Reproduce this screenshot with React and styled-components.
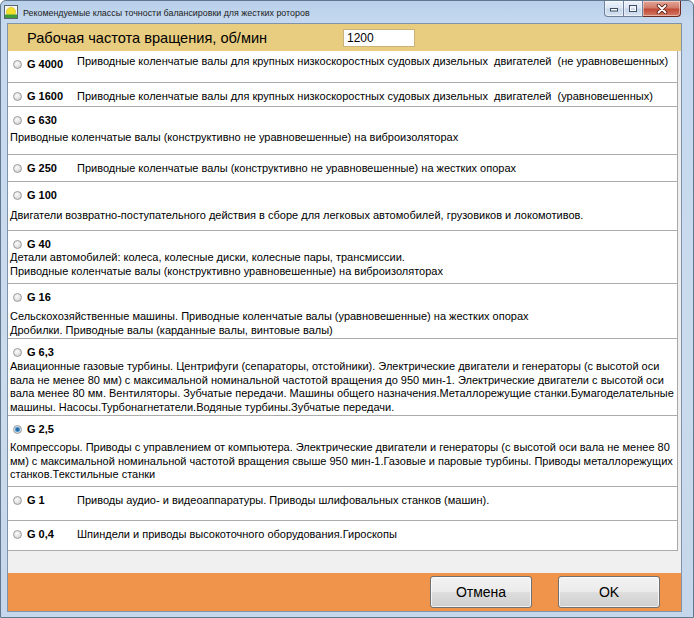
import React from 'react';
import styled, { createGlobalStyle } from 'styled-components';

const GlobalStyle = createGlobalStyle`
  html, body { margin: 0; padding: 0; width: 694px; height: 618px; overflow: hidden; background: #ffffff; }
  body { font-family: "Liberation Sans", Arial, sans-serif; color: #000; }
  #root { width: 694px; height: 618px; }
`;

const Window = styled.div`
  box-sizing: border-box;
  width: 694px;
  height: 618px;
  display: flex;
  flex-direction: column;
  border: 1px solid #62788f;
  border-radius: 6px 6px 0 0;
  background: linear-gradient(180deg, #b9d0ea 0px, #c6d9ef 22px, #cbdbee 60%, #c7d7eb 100%);
  overflow: hidden;
`;

const TitleBar = styled.div`
  height: 22px;
  flex: none;
  display: flex;
  align-items: center;
  padding-left: 3px;
  padding-right: 12px;
`;

const TitleText = styled.div`
  margin-left: 5px;
  padding-top: 2px;
  font-size: 8.9px;
  color: #1b1b1b;
  white-space: nowrap;
`;

const CaptionGroup = styled.div`
  margin-left: auto;
  align-self: flex-start;
  display: flex;
  height: 16px;
`;

const CaptionButton = styled.div`
  box-sizing: border-box;
  width: ${p => p.$w}px;
  height: 16px;
  display: flex;
  align-items: center;
  justify-content: center;
  border: 1px solid ${p => (p.$close ? '#6b2b22' : '#6f819a')};
  border-top: none;
  border-left-width: ${p => (p.$first ? 1 : 0)}px;
  border-radius: ${p => (p.$first ? '0 0 0 4px' : p.$close ? '0 0 4px 0' : '0')};
  background: ${p =>
    p.$close
      ? 'linear-gradient(180deg, #e3a597 0%, #d27c6a 45%, #c04a36 55%, #d47a64 100%)'
      : 'linear-gradient(180deg, #eef3fa 0%, #dbe6f3 45%, #c6d6ea 55%, #d7e3f2 100%)'};
  box-shadow: inset 0 0 0 1px rgba(255, 255, 255, 0.45);
`;

const ClientFrame = styled.div`
  flex: 1;
  display: flex;
  padding: 0 11px 5px 6px;
`;

const Client = styled.div`
  flex: 1;
  display: flex;
  flex-direction: column;
  border: 1px solid #7f93ab;
  background: #f0f0f0;
`;

const Header = styled.div`
  height: 27px;
  flex: none;
  box-sizing: border-box;
  display: grid;
  grid-template-columns: 316px 72px;
  align-items: center;
  padding-left: 19px;
  background: #e8cc7f;
`;

const HeaderTitle = styled.div`
  font-size: 14.6px;
  white-space: nowrap;
  color: #000;
`;

const SpeedInput = styled.div`
  box-sizing: border-box;
  height: 18px;
  background: #ffffff;
  border: 1px solid #c9b37a;
  font-size: 12px;
  line-height: 16px;
  padding-left: 3px;
`;

const List = styled.div`
  box-sizing: border-box;
  width: 670px;
  background: #ffffff;
  border-right: 1px solid #a9a9a9;
  display: flex;
  flex-direction: column;
`;

const Row = styled.div`
  box-sizing: border-box;
  height: ${p => p.$h}px;
  border-bottom: 1px solid #acacac;
  padding: 6px 0 0 2px;
  display: flex;
  flex-direction: ${p => (p.$inline ? 'row' : 'column')};
  align-items: flex-start;
`;

const Head = styled.div`
  display: flex;
  align-items: center;
  gap: 5px;
  height: 14px;
  padding-left: 3px;
  width: ${p => (p.$inline ? '64px' : 'auto')};
  flex: none;
`;

const Radio = styled.span`
  box-sizing: border-box;
  width: 9px;
  height: 9px;
  border-radius: 50%;
  border: 1px solid #9a9a9a;
  background: ${p =>
    p.$checked
      ? 'radial-gradient(circle at 50% 50%, #1d5f96 0, #2e79b8 1.6px, #9fc9ea 2.8px, #eaeaea 3.2px, #d6d6d6 100%)'
      : 'radial-gradient(circle at 40% 35%, #fbfbfb 0, #e4e4e4 50%, #c8c8c8 100%)'};
  flex: none;
`;

const Label = styled.span`
  font-size: 11px;
  font-weight: bold;
  line-height: 14px;
  white-space: nowrap;
`;

const Desc = styled.div`
  font-size: 11px;
  line-height: ${p => (p.$inline ? '14px' : '13.6px')};
  white-space: pre;
  margin-top: ${p => p.$gap || 0}px;
`;

const Spacer = styled.div`
  height: 22px;
  flex: none;
`;

const Footer = styled.div`
  height: 38px;
  flex: none;
  background: #f1944b;
  display: flex;
  align-items: center;
  justify-content: flex-end;
  gap: 26px;
  padding-right: 21px;
`;

const DialogButton = styled.div`
  box-sizing: border-box;
  width: 102px;
  height: 32px;
  display: flex;
  align-items: center;
  justify-content: center;
  border: 1px solid #707070;
  border-radius: 3px;
  background: linear-gradient(180deg, #f2f2f2 0%, #ebebeb 48%, #dddddd 52%, #cfcfcf 100%);
  box-shadow: inset 0 0 0 1px rgba(255, 255, 255, 0.7);
  font-size: 14px;
  color: #000;
`;

const AppIcon = () => (
  <svg width="14" height="14" viewBox="0 0 14 14">
    <rect x="0.5" y="0.5" width="13" height="13" fill="#f4f6f2" stroke="#5b6470" />
    <circle cx="7" cy="7" r="4.6" fill="#f3e02b" stroke="#d6b814" strokeWidth="0.6" />
    <rect x="1" y="9.5" width="12" height="3.5" fill="#3f9b3a" />
  </svg>
);

const MinGlyph = () => (
  <svg width="10" height="6" viewBox="0 0 10 6">
    <rect x="1.5" y="2.5" width="7" height="2.5" fill="#ffffff" stroke="#3d4d63" strokeWidth="1" />
  </svg>
);

const MaxGlyph = () => (
  <svg width="10" height="9" viewBox="0 0 10 9">
    <rect x="1.5" y="1.5" width="7" height="6" fill="none" stroke="#3d4d63" strokeWidth="1" />
    <rect x="2.5" y="3" width="5" height="3.5" fill="none" stroke="#ffffff" strokeWidth="1" />
  </svg>
);

const CloseGlyph = () => (
  <svg width="12" height="10" viewBox="0 0 12 10">
    <path d="M2.5 1.5 L9.5 8.5 M9.5 1.5 L2.5 8.5" stroke="#5a1f18" strokeWidth="3.6" strokeLinecap="round" />
    <path d="M2.5 1.5 L9.5 8.5 M9.5 1.5 L2.5 8.5" stroke="#ffffff" strokeWidth="1.8" strokeLinecap="round" />
  </svg>
);

const classes = [
  {
    g: 'G 4000', h: 32, inline: true, gap: -3,
    lines: ['Приводные коленчатые валы для крупных низкоскоростных судовых дизельных  двигателей  (не уравновешенных)'],
  },
  {
    g: 'G 1600', h: 24, inline: true,
    lines: ['Приводные коленчатые валы для крупных низкоскоростных судовых дизельных  двигателей  (уравновешенных)'],
  },
  {
    g: 'G 630', h: 48, gap: 4,
    lines: ['Приводные коленчатые валы (конструктивно не уравновешенные) на виброизоляторах'],
  },
  {
    g: 'G 250', h: 27, inline: true,
    lines: ['Приводные коленчатые валы (конструктивно не уравновешенные) на жестких опорах'],
  },
  {
    g: 'G 100', h: 49, gap: 7,
    lines: ['Двигатели возвратно-поступательного действия в сборе для легковых автомобилей, грузовиков и локомотивов.'],
  },
  {
    g: 'G 40', h: 53, gap: 0,
    lines: [
      'Детали автомобилей: колеса, колесные диски, колесные пары, трансмиссии.',
      'Приводные коленчатые валы (конструктивно уравновешенные) на виброизоляторах',
    ],
  },
  {
    g: 'G 16', h: 55, gap: 6,
    lines: [
      'Сельскохозяйственные машины. Приводные коленчатые валы (уравновешенные) на жестких опорах',
      'Дробилки. Приводные валы (карданные валы, винтовые валы)',
    ],
  },
  {
    g: 'G 6,3', h: 77, gap: 1,
    lines: [
      'Авиационные газовые турбины. Центрифуги (сепараторы, отстойники). Электрические двигатели и генераторы (с высотой оси',
      'вала не менее 80 мм) с максимальной номинальной частотой вращения до 950 мин-1. Электрические двигатели с высотой оси',
      'вала менее 80 мм. Вентиляторы. Зубчатые передачи. Машины общего назначения.Металлорежущие станки.Бумагоделательные',
      'машины. Насосы.Турбонагнетатели.Водяные турбины.Зубчатые передачи.',
    ],
  },
  {
    g: 'G 2,5', h: 71, gap: 5, checked: true,
    lines: [
      'Компрессоры. Приводы с управлением от компьютера. Электрические двигатели и генераторы (с высотой оси вала не менее 80',
      'мм) с максимальной номинальной частотой вращения свыше 950 мин-1.Газовые и паровые турбины. Приводы металлорежущих',
      'станков.Текстильные станки',
    ],
  },
  {
    g: 'G 1', h: 34, inline: true,
    lines: ['Приводы аудио- и видеоаппаратуры. Приводы шлифовальных станков (машин).'],
  },
  {
    g: 'G 0,4', h: 30, inline: true,
    lines: ['Шпиндели и приводы высокоточного оборудования.Гироскопы'],
  },
];

export default function App() {
  return (
    <>
      <GlobalStyle />
      <Window>
        <TitleBar>
          <AppIcon />
          <TitleText>Рекомендуемые классы точности балансировки для жестких роторов</TitleText>
          <CaptionGroup>
            <CaptionButton $w={20} $first>
              <MinGlyph />
            </CaptionButton>
            <CaptionButton $w={19}>
              <MaxGlyph />
            </CaptionButton>
            <CaptionButton $w={38} $close>
              <CloseGlyph />
            </CaptionButton>
          </CaptionGroup>
        </TitleBar>
        <ClientFrame>
          <Client>
            <Header>
              <HeaderTitle>Рабочая частота вращения, об/мин</HeaderTitle>
              <SpeedInput>1200</SpeedInput>
            </Header>
            <List>
              {classes.map(c => (
                <Row key={c.g} $h={c.h} $inline={c.inline}>
                  <Head $inline={c.inline}>
                    <Radio $checked={c.checked} />
                    <Label>{c.g}</Label>
                  </Head>
                  <Desc $inline={c.inline} $gap={c.gap}>
                    {c.lines.join('\n')}
                  </Desc>
                </Row>
              ))}
            </List>
            <Spacer />
            <Footer>
              <DialogButton>Отмена</DialogButton>
              <DialogButton>OK</DialogButton>
            </Footer>
          </Client>
        </ClientFrame>
      </Window>
    </>
  );
}
